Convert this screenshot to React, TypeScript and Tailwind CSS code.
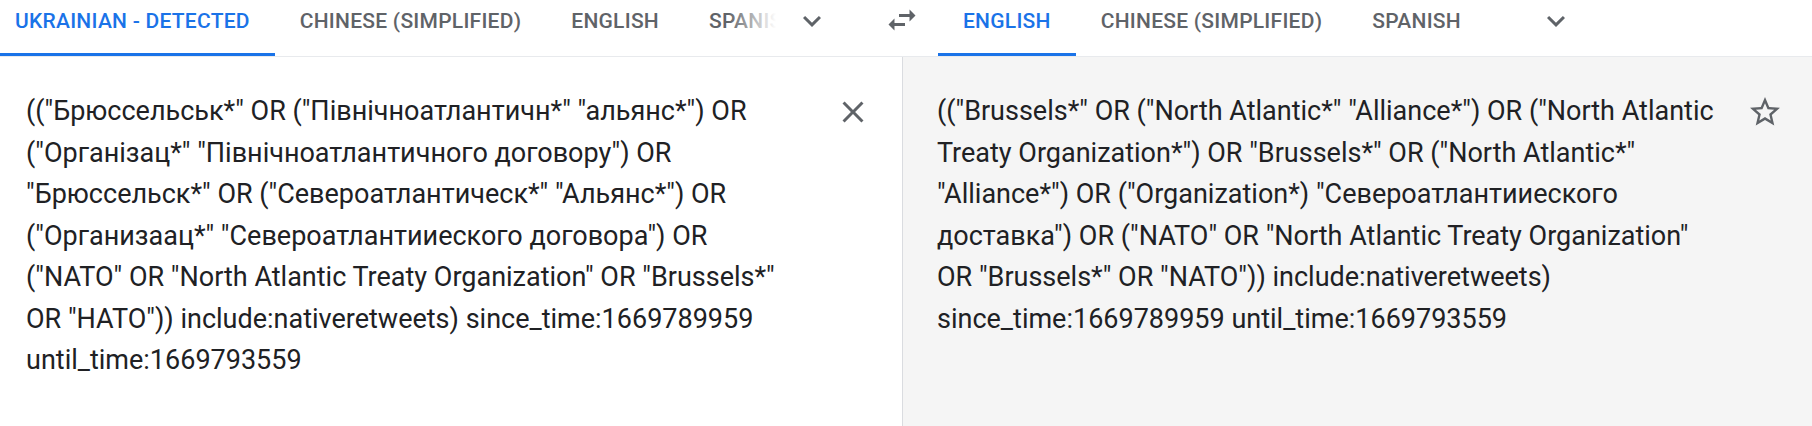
import React from "react"

const sourceLines = [
  '(("Брюссельськ*" OR ("Північноатлантичн*" "альянс*") OR',
  '("Організац*" "Північноатлантичного договору") OR',
  '"Брюссельск*" OR ("Североатлантическ*" "Альянс*") OR',
  '("Организаац*" "Североатлантииеского договора") OR',
  '("NATO" OR "North Atlantic Treaty Organization" OR "Brussels*"',
  'OR "HATO")) include:nativeretweets) since_time:1669789959',
  "until_time:1669793559",
]

const targetLines = [
  '(("Brussels*" OR ("North Atlantic*" "Alliance*") OR ("North Atlantic',
  'Treaty Organization*") OR "Brussels*" OR ("North Atlantic*"',
  '"Alliance*") OR ("Organization*) "Североатлантииеского',
  'доставка") OR ("NATO" OR "North Atlantic Treaty Organization"',
  'OR "Brussels*" OR "NATO")) include:nativeretweets)',
  "since_time:1669789959 until_time:1669793559",
]

function Tab({ label, active, first }: { label: string; active?: boolean; first?: boolean }) {
  return (
    <div
      className={`relative h-[56px] shrink-0 whitespace-nowrap pt-[11px] text-[21px] leading-[20px] font-medium tracking-[0.25px] ${
        first ? "pl-[15px] pr-[25px]" : "px-[25px]"
      } ${active ? "text-[#1a73e8]" : "text-[#5f6368]"}`}
    >
      {label}
      {active && <div className="absolute bottom-0 left-0 right-0 h-[3px] bg-[#1a73e8]" />}
    </div>
  )
}

function Chevron() {
  return (
    <svg width="36" height="36" viewBox="0 0 24 24" fill="#5f6368">
      <path d="M16.59 8.59 12 13.17 7.41 8.59 6 10l6 6 6-6z" />
    </svg>
  )
}

export default function App() {
  return (
    <div className="h-screen flex flex-col bg-white font-['Roboto','Noto_Sans',sans-serif] overflow-hidden">
      {/* Language tabs */}
      <div className="flex h-[57px] shrink-0 border-b border-[#e8eaed]">
        <div className="flex w-[866px] shrink-0 pr-[18px]">
          <div className="relative flex w-[776px] overflow-hidden">
            <Tab label="UKRAINIAN - DETECTED" active first />
            <Tab label="CHINESE (SIMPLIFIED)" />
            <Tab label="ENGLISH" />
            <Tab label="SPANISH" />
            <div className="absolute right-0 top-0 h-[52px] w-[48px] bg-gradient-to-r from-white/0 to-white" />
          </div>
          <div className="flex w-[72px] justify-center pt-[3px]">
            <Chevron />
          </div>
        </div>
        <div className="flex w-[72px] shrink-0 justify-center pt-[2px]">
          <svg width="36" height="36" viewBox="0 0 24 24" fill="#5f6368">
            <path d="M6.99 11 3 15l3.99 4v-3H14v-2H6.99v-3zM21 9l-3.99-4v3H10v2h7.01v3L21 9z" />
          </svg>
        </div>
        <div className="flex flex-1">
          <div className="flex w-[582px] shrink-0">
            <Tab label="ENGLISH" active />
            <Tab label="CHINESE (SIMPLIFIED)" />
            <Tab label="SPANISH" />
          </div>
          <div className="flex w-[72px] justify-center pt-[3px]">
            <Chevron />
          </div>
        </div>
      </div>

      {/* Text panels */}
      <div className="flex flex-1">
        <div className="flex w-[903px] shrink-0 border-r border-[#dadce0] pl-[26px] pr-[31px] pt-[34px]">
          <div className="flex-1 text-[27px] leading-[41.5px] text-[#202124] whitespace-nowrap">
            {sourceLines.map((l, i) => (
              <div key={i}>{l}</div>
            ))}
          </div>
          <div className="mt-[3px] h-[36px] w-[36px] shrink-0">
            <svg width="36" height="36" viewBox="0 0 24 24" fill="#5f6368">
              <path d="M19 6.41 17.59 5 12 10.59 6.41 5 5 6.41 10.59 12 5 17.59 6.41 19 12 13.41 17.59 19 19 17.59 13.41 12z" />
            </svg>
          </div>
        </div>
        <div className="flex flex-1 bg-[#f5f5f5] pl-[34px] pr-[29px] pt-[34px]">
          <div className="flex-1 text-[27px] leading-[41.5px] text-[#202124] whitespace-nowrap">
            {targetLines.map((l, i) => (
              <div key={i}>{l}</div>
            ))}
          </div>
          <div className="mt-[3px] h-[36px] w-[36px] shrink-0">
            <svg width="36" height="36" viewBox="0 0 24 24" fill="#5f6368">
              <path d="M22 9.24l-7.19-.62L12 2 9.19 8.63 2 9.24l5.46 4.73L5.82 21 12 17.27 18.18 21l-1.63-7.03L22 9.24zM12 15.4l-3.76 2.27 1-4.28-3.32-2.88 4.38-.38L12 6.1l1.71 4.04 4.38.38-3.32 2.88 1 4.28L12 15.4z" />
            </svg>
          </div>
        </div>
      </div>
    </div>
  )
}
